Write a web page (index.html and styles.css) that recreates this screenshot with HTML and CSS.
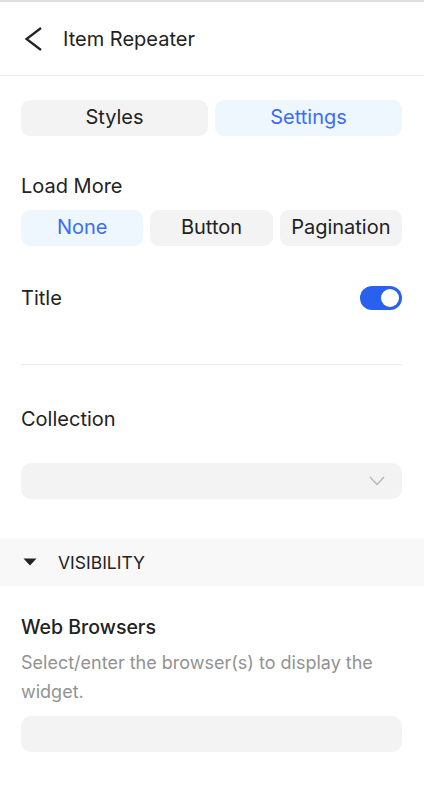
FILE: index.html
```html
<!DOCTYPE html>
<html>
<head>
<meta charset="utf-8">
<link rel="stylesheet" href="styles.css">
</head>
<body>
<div class="panel">
  <header class="header">
    <svg class="back" width="20" height="24" viewBox="0 0 20 24"><path d="M19 1 L4.5 12 L19 23" fill="none" stroke="#222" stroke-width="2.2"/></svg>
    <span class="header-title">Item Repeater</span>
  </header>
  <div class="content">
    <div class="tabs">
      <div class="seg">Styles</div>
      <div class="seg active">Settings</div>
    </div>
    <div class="label load-label">Load More</div>
    <div class="options">
      <div class="seg active">None</div>
      <div class="seg">Button</div>
      <div class="seg">Pagination</div>
    </div>
    <div class="row">
      <span class="label">Title</span>
      <span class="toggle"><span class="knob"></span></span>
    </div>
    <div class="divider"></div>
    <div class="label coll-label">Collection</div>
    <div class="select">
      <svg width="16" height="10" viewBox="0 0 16 10"><path d="M1 1 L8 8.5 L15 1" fill="none" stroke="#b5b5b5" stroke-width="1.3"/></svg>
    </div>
  </div>
  <div class="section">
    <svg class="tri" width="14" height="8" viewBox="0 0 14 8"><path d="M0.5 0.5 H13.5 L7 7.5 Z" fill="#222"/></svg>
    <span>VISIBILITY</span>
  </div>
  <div class="content">
    <div class="label wb-label">Web Browsers</div>
    <p class="desc">Select/enter the browser(s) to display the widget.</p>
    <div class="input"></div>
  </div>
</div>
</body>
</html>
```
FILE: styles.css
```css
* { box-sizing: border-box; }
html, body { margin: 0; padding: 0; background: #fff; }
body {
  font-family: Inter, "Noto Sans", sans-serif;
  color: #222;
  width: 424px;
}
.panel {
  border-top: 2px solid #dedede;
}
.header {
  height: 74px;
  display: flex;
  align-items: center;
  padding-left: 22px;
  border-bottom: 1px solid #ededed;
}
.back { margin-right: 21px; margin-top: 1px; }
.header-title { font-size: 20px; }
.content { padding: 0 22px 0 21px; }
.tabs {
  margin-top: 24px;
  display: grid;
  grid-template-columns: 1fr 1fr;
  gap: 7px;
}
.seg {
  height: 36px;
  border-radius: 9px;
  background: #f3f3f3;
  display: flex;
  align-items: center;
  justify-content: center;
  padding-bottom: 3px;
  font-size: 20px;
  color: #222;
}
.seg.active { background: #eef6fe; color: #3a6cf4; }
.label { font-size: 20px; line-height: 24px; }
.load-label { margin-top: 38px; }
.options {
  margin-top: 12px;
  display: grid;
  grid-template-columns: 1fr 1fr 1fr;
  gap: 7px;
}
.row {
  margin-top: 40px;
  display: flex;
  align-items: center;
  justify-content: space-between;
  height: 24px;
}
.toggle {
  width: 42px;
  height: 24px;
  border-radius: 12px;
  background: #2a60f0;
  display: flex;
  align-items: center;
  justify-content: flex-end;
  padding-right: 3px;
}
.knob {
  width: 18px;
  height: 18px;
  border-radius: 50%;
  background: #fff;
}
.divider {
  margin-top: 54px;
  height: 1px;
  background: #ececec;
}
.coll-label { margin-top: 42px; }
.select {
  margin-top: 32px;
  height: 36px;
  border-radius: 10px;
  background: #f3f3f3;
  display: flex;
  align-items: center;
  justify-content: flex-end;
  padding-right: 17px;
}
.section {
  margin-top: 39px;
  height: 48px;
  background: #f8f8f8;
  display: flex;
  align-items: center;
  padding-left: 23px;
  font-size: 17.5px;
  color: #222;
}
.tri { margin-right: 21px; }
.wb-label { margin-top: 29px; font-weight: 500; font-size: 19.5px; }
.desc {
  margin: 9px 0 0;
  font-size: 18px;
  line-height: 29px;
  color: #929292;
}
.input {
  margin-top: 10px;
  height: 36px;
  border-radius: 10px;
  background: #f3f3f3;
}
```
